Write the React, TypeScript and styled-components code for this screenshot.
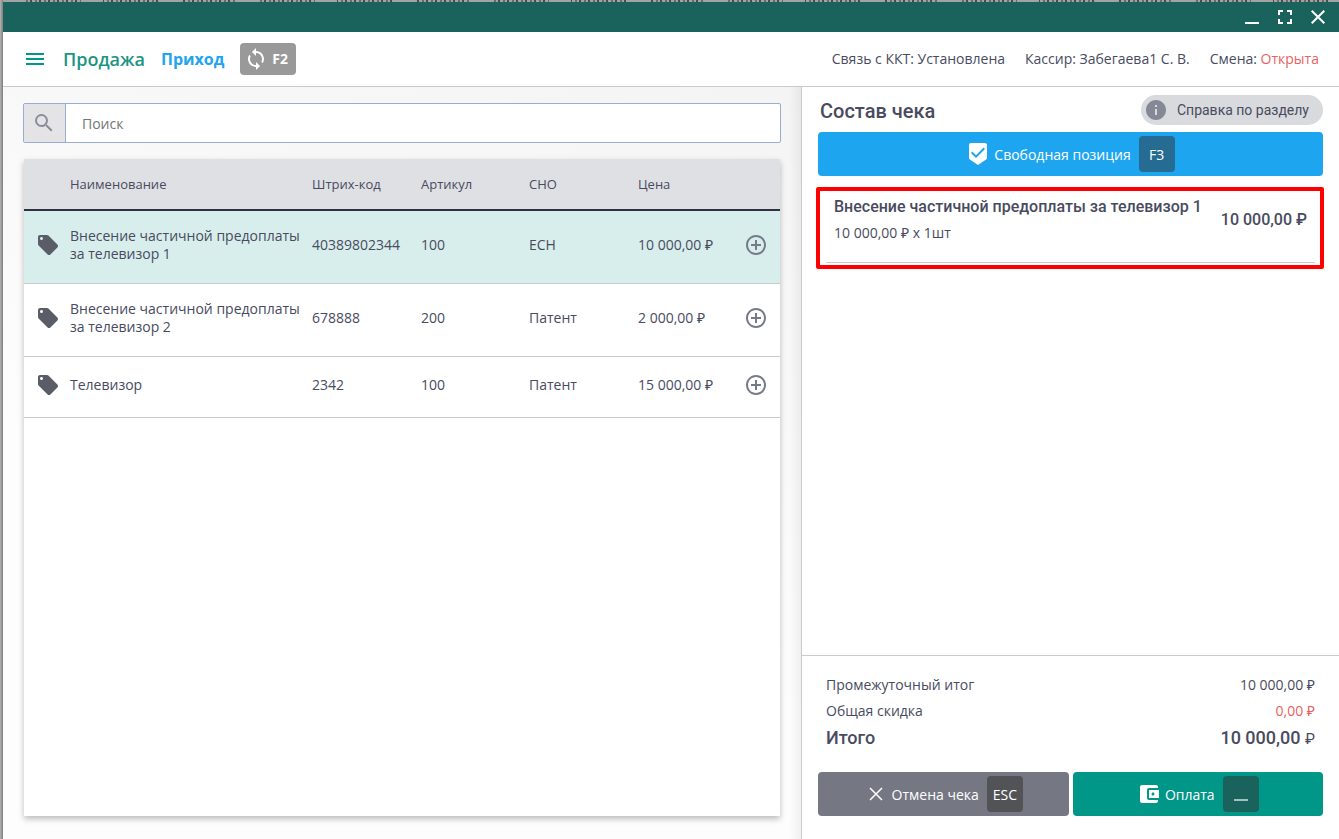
import React from "react";
import styled, { createGlobalStyle } from "styled-components";
import {
  MdAccountBalanceWallet,
  MdAddCircleOutline,
  MdBeenhere,
  MdInfo,
  MdLocalOffer,
  MdMenu,
  MdSearch,
  MdSync,
} from "react-icons/md";

const ink = "#484b60";
const teal = "#009688";
const red = "#e8625f";
const line = "#c9cacb";
const body = `"Open Sans", "Noto Sans", sans-serif`;
const display = `Roboto, "Open Sans", sans-serif`;

const GlobalStyle = createGlobalStyle`
  *, *::before, *::after { box-sizing: border-box; }
  body { margin: 0; background: #a2a2a2; color: ${ink}; font: 14px/18px ${body}; }
  button, input { font: inherit; color: inherit; }
  button { border: 0; padding: 0; background: none; cursor: pointer; }
  h1, h2, p { margin: 0; }
`;

const Desktop = styled.div`
  display: flex;
  flex-direction: column;
  min-height: 100vh;
  padding-left: 3px;
  background: linear-gradient(90deg, #b4b4b4, #7d7d7d 3px);
`;

const BackStrip = styled.div`
  height: 2px;
  background:
    repeating-linear-gradient(90deg, #a3a3a3 0 22px, rgba(163, 163, 163, 0) 22px 78px),
    repeating-linear-gradient(90deg, #4a4a4a 0 2px, #a3a3a3 2px 5px, #6a6a6a 5px 7px, #a3a3a3 7px 9px);
`;

const Window = styled.div`
  flex: 1;
  display: flex;
  flex-direction: column;
  background: #fff;
`;

const TitleBar = styled.div`
  display: flex;
  justify-content: flex-end;
  align-items: center;
  gap: 16px;
  height: 30px;
  padding-right: 13px;
  background: #1a635c;
  color: #fff;
`;

const TitleButton = styled.button`
  display: flex;
  width: 17px;
  height: 30px;
  align-items: center;
  justify-content: center;
`;

const Header = styled.header`
  display: flex;
  align-items: center;
  height: 55px;
  padding: 0 20px;
  border-bottom: 1px solid ${line};
`;

const MenuButton = styled.button`
  display: flex;
  color: ${teal};
  margin-right: 16px;
`;

const PageTitle = styled.h1`
  font-size: 18px;
  line-height: 24px;
  font-weight: 600;
  color: #1b9484;
  margin-right: 16px;
`;

const ModeLink = styled.a`
  font-size: 16px;
  line-height: 24px;
  font-weight: 700;
  color: #1fa4ee;
  text-decoration: none;
  margin-right: 16px;
`;

const RefreshButton = styled.button`
  display: flex;
  align-items: center;
  gap: 4px;
  height: 32px;
  padding: 0 8px 0 4px;
  border-radius: 4px;
  background: #999;
  color: #fff;
  font-weight: 700;
`;

const Status = styled.div`
  display: flex;
  gap: 20px;
  margin-left: auto;
`;

const Danger = styled.span`
  color: ${red};
`;

const Main = styled.main`
  flex: 1;
  display: grid;
  grid-template-columns: minmax(0, 1fr) 538px;
`;

const Catalog = styled.section`
  display: flex;
  flex-direction: column;
  gap: 16px;
  padding: 16px 20px 23px;
  background:
    linear-gradient(270deg, rgba(0, 0, 0, 0.05), rgba(0, 0, 0, 0) 12px),
    linear-gradient(200deg, #f4f4f4, #fdfdfd 60%);
`;

const Search = styled.label`
  display: flex;
  height: 40px;
  border: 1px solid #98add0;
  border-radius: 2px;
  background: #fff;
`;

const SearchIcon = styled.span`
  display: flex;
  align-items: center;
  justify-content: center;
  width: 42px;
  padding-right: 2px;
  border-right: 1px solid #98add0;
  background: #e4e4e7;
  color: #8b8c9c;
`;

const SearchInput = styled.input`
  flex: 1;
  min-width: 0;
  border: 0;
  outline: 0;
  padding: 2px 16px 0;
  background: transparent;
  &::placeholder { color: #757575; opacity: 1; }
`;

const Card = styled.div`
  flex: 1;
  margin: 0 1px;
  background: #fff;
  box-shadow: 0 3px 6px rgba(0, 0, 0, 0.26);
`;

const Table = styled.table`
  width: 100%;
  table-layout: fixed;
  border-collapse: separate;
  border-spacing: 0;
`;

const Col = styled.col<{ $w?: number }>`
  width: ${(p) => (p.$w ? `${p.$w}px` : "auto")};
`;

const Th = styled.th`
  height: 52px;
  padding: 0;
  border-bottom: 2px solid #2d3142;
  background: #dfe0e4;
  font-size: 13px;
  font-weight: 400;
  text-align: left;
`;

const Row = styled.tr<{ $selected?: boolean }>`
  background: ${(p) => (p.$selected ? "#d8eeec" : "#fff")};
`;

const Td = styled.td`
  height: 61px;
  padding: 16px 0 20px;
  border-bottom: 1px solid ${line};
  vertical-align: middle;
`;

const TagCell = styled(Td)`
  padding-left: 12px;
  color: #5a5c68;
  svg { display: block; }
`;

const AddButton = styled.button`
  display: flex;
  margin-left: auto;
  margin-right: 12px;
  color: #777a88;
`;

const Receipt = styled.section`
  display: flex;
  flex-direction: column;
  border-left: 1px solid ${line};
  background: #fff;
`;

const ReceiptTop = styled.div`
  flex: 1;
  padding: 8px 16px 0;
`;

const ReceiptHead = styled.div`
  display: flex;
  align-items: center;
  justify-content: space-between;
  padding-left: 2px;
  margin-bottom: 7px;
`;

const ReceiptTitle = styled.h2`
  padding-top: 2px;
  font: 500 20px/28px ${display};
`;

const HelpButton = styled.button`
  display: flex;
  align-items: center;
  gap: 9px;
  height: 30px;
  padding: 0 14px 0 3px;
  border-radius: 15px;
  background: #d9dade;
  font: 400 14px/18px ${display};
  svg { color: #858895; }
`;

const Action = styled.button<{ $bg: string }>`
  display: flex;
  align-items: center;
  justify-content: center;
  width: 100%;
  height: 44px;
  border-radius: 4px;
  background: ${(p) => p.$bg};
  color: #fff;
`;

const ActionLabel = styled.span`
  margin: 0 8px 0 4px;
  padding-top: 2px;
`;

const Key = styled.kbd<{ $bg: string }>`
  display: flex;
  align-items: center;
  justify-content: center;
  width: 36px;
  height: 36px;
  padding-top: 2px;
  border-radius: 4px;
  background: ${(p) => p.$bg};
  font: inherit;
`;

const Item = styled.article`
  display: flex;
  margin: 11px -1px 0 -2px;
  padding: 4px 5px 2px 6px;
  height: 82px;
  border: 4px solid #f00;
  border-radius: 2px;
`;

const ItemInner = styled.div`
  flex: 1;
  display: flex;
  justify-content: space-between;
  padding: 0 8px;
  border-bottom: 1px solid ${line};
`;

const ItemName = styled.p`
  font: 500 16px/24px ${display};
`;

const ItemQty = styled.p`
  line-height: 28px;
`;

const ItemSum = styled.p`
  font: 500 16px/24px ${display};
  padding-top: 13px;
`;

const Summary = styled.footer`
  border-top: 1px solid ${line};
  padding: 16px 16px 23px;
`;

const Line = styled.div`
  display: flex;
  justify-content: space-between;
  padding: 0 8px;
  line-height: 26px;
`;

const TotalLine = styled(Line)`
  font: 500 18px/28px ${display};
  small { font: 400 15px/28px ${display}; }
`;

const Actions = styled.div`
  display: grid;
  grid-template-columns: 1fr 1fr;
  gap: 4px;
  margin-top: 19px;
`;

const goods = [
  { name: "Внесение частичной предоплаты за телевизор 1", code: "40389802344", art: "100", tax: "ЕСН", price: "10 000,00 ₽", selected: true },
  { name: "Внесение частичной предоплаты за телевизор 2", code: "678888", art: "200", tax: "Патент", price: "2 000,00 ₽" },
  { name: "Телевизор", code: "2342", art: "100", tax: "Патент", price: "15 000,00 ₽" },
];

export default function App() {
  return (
    <Desktop>
      <GlobalStyle />
      <BackStrip />
      <Window>
        <TitleBar>
          <TitleButton aria-label="Свернуть">
            <svg width="14" height="16" viewBox="0 0 14 16"><path d="M0 14h14" stroke="currentColor" strokeWidth="2" /></svg>
          </TitleButton>
          <TitleButton aria-label="Развернуть">
            <svg width="14" height="14" viewBox="0 0 14 14" fill="none" stroke="currentColor" strokeWidth="2">
              <path d="M1 5V1h4M9 1h4v4M13 9v4H9M5 13H1V9" />
            </svg>
          </TitleButton>
          <TitleButton aria-label="Закрыть">
            <svg width="14" height="14" viewBox="0 0 14 14" stroke="currentColor" strokeWidth="2">
              <path d="M.7.7l12.6 12.6M13.3.7L.7 13.3" />
            </svg>
          </TitleButton>
        </TitleBar>
        <Header>
          <MenuButton aria-label="Меню"><MdMenu size={24} /></MenuButton>
          <PageTitle>Продажа</PageTitle>
          <ModeLink href="#income">Приход</ModeLink>
          <RefreshButton><MdSync size={24} />F2</RefreshButton>
          <Status>
            <span>Связь с ККТ: Установлена</span>
            <span>Кассир: Забегаева1 С. В.</span>
            <span>Смена: <Danger>Открыта</Danger></span>
          </Status>
        </Header>
        <Main>
          <Catalog>
            <Search>
              <SearchIcon><MdSearch size={24} /></SearchIcon>
              <SearchInput type="text" placeholder="Поиск" aria-label="Поиск" />
            </Search>
            <Card>
              <Table>
                <colgroup>
                  <Col $w={46} /><Col /><Col $w={109} /><Col $w={108} /><Col $w={109} /><Col $w={98} /><Col $w={44} />
                </colgroup>
                <thead>
                  <tr>
                    <Th /><Th>Наименование</Th><Th>Штрих-код</Th><Th>Артикул</Th><Th>СНО</Th><Th>Цена</Th><Th />
                  </tr>
                </thead>
                <tbody>
                  {goods.map((g) => (
                    <Row key={g.name} $selected={g.selected}>
                      <TagCell><MdLocalOffer size={24} /></TagCell>
                      <Td>{g.name}</Td>
                      <Td>{g.code}</Td>
                      <Td>{g.art}</Td>
                      <Td>{g.tax}</Td>
                      <Td>{g.price}</Td>
                      <Td><AddButton aria-label="Добавить"><MdAddCircleOutline size={24} /></AddButton></Td>
                    </Row>
                  ))}
                </tbody>
              </Table>
            </Card>
          </Catalog>
          <Receipt>
            <ReceiptTop>
              <ReceiptHead>
                <ReceiptTitle>Состав чека</ReceiptTitle>
                <HelpButton><MdInfo size={24} />Справка по разделу</HelpButton>
              </ReceiptHead>
              <Action $bg="#1ea5ef">
                <MdBeenhere size={24} />
                <ActionLabel>Свободная позиция</ActionLabel>
                <Key $bg="#266c92">F3</Key>
              </Action>
              <Item>
                <ItemInner>
                  <div>
                    <ItemName>Внесение частичной предоплаты за телевизор 1</ItemName>
                    <ItemQty>10 000,00 ₽ x 1шт</ItemQty>
                  </div>
                  <ItemSum>10 000,00 ₽</ItemSum>
                </ItemInner>
              </Item>
            </ReceiptTop>
            <Summary>
              <Line><span>Промежуточный итог</span><span>10 000,00 ₽</span></Line>
              <Line><span>Общая скидка</span><Danger>0,00 ₽</Danger></Line>
              <TotalLine><span>Итого</span><span>10 000,00 <small>₽</small></span></TotalLine>
              <Actions>
                <Action $bg="#757783">
                  <svg width="24" height="24" viewBox="0 0 24 24" stroke="currentColor" strokeWidth="1.5">
                    <path d="M6 6l12 12M18 6L6 18" />
                  </svg>
                  <ActionLabel>Отмена чека</ActionLabel>
                  <Key $bg="#525356">ESC</Key>
                </Action>
                <Action $bg={teal}>
                  <MdAccountBalanceWallet size={24} />
                  <ActionLabel>Оплата</ActionLabel>
                  <Key $bg="#1a635c">
                    <svg width="14" height="14" viewBox="0 0 14 14"><path d="M0 12h14" stroke="#a3c1be" strokeWidth="2" /></svg>
                  </Key>
                </Action>
              </Actions>
            </Summary>
          </Receipt>
        </Main>
      </Window>
    </Desktop>
  );
}
